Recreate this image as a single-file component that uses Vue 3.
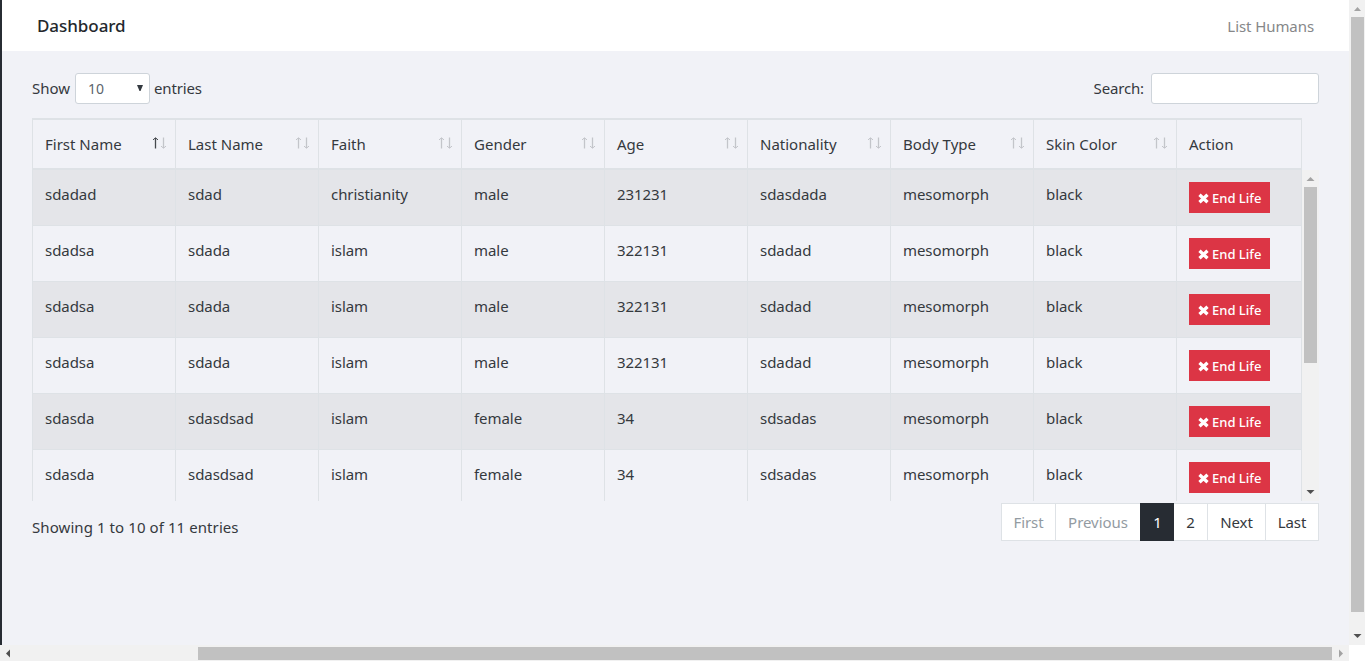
<script setup>
const columns = ['First Name', 'Last Name', 'Faith', 'Gender', 'Age', 'Nationality', 'Body Type', 'Skin Color', 'Action']
const islamMale = ['sdadsa', 'sdada', 'islam', 'male', '322131', 'sdadad', 'mesomorph', 'black']
const islamFemale = ['sdasda', 'sdasdsad', 'islam', 'female', '34', 'sdsadas', 'mesomorph', 'black']
const rows = [
  ['sdadad', 'sdad', 'christianity', 'male', '231231', 'sdasdada', 'mesomorph', 'black'],
  islamMale, islamMale, islamMale, islamFemale, islamFemale,
]
const pages = [
  { label: 'First', cls: 'first muted' },
  { label: 'Previous', cls: 'previous muted' },
  { label: '1', cls: 'num active' },
  { label: '2', cls: 'num' },
  { label: 'Next', cls: 'next' },
  { label: 'Last', cls: 'last' },
]
</script>

<template>
  <div class="window">
    <main class="page">
      <header class="topbar">
        <span class="brand">Dashboard</span>
        <a class="nav-link">List Humans</a>
      </header>
      <section class="content">
        <div class="controls">
          <label class="length"><span class="show">Show</span>
            <span class="select"><span>10</span>
              <svg width="6" height="7" viewBox="0 0 6 7"><path d="M0 0h6L3.5 6h-1z" fill="#343a40" /></svg>
            </span>
            <span class="entries">entries</span>
          </label>
          <label class="filter"><span class="search-label">Search:</span><input type="text" class="search" /></label>
        </div>

        <div class="grid-row head">
          <div v-for="(c, i) in columns" :key="c" class="cell th">
            <span>{{ c }}</span>
            <svg v-if="i < 8" class="sort" width="15" height="12" viewBox="0 0 15 12" fill="none">
              <g :stroke="i === 0 ? '#45494e' : '#c3c5ca'">
                <path d="M3.5 1v10.5" stroke-width="1.3" /><path d="M1 2.9 3.5.8 6 2.9" />
              </g>
              <g stroke="#c3c5ca">
                <path d="M11.5.5V11" stroke-width="1.3" /><path d="M9 9.1l2.5 2.1L14 9.1" />
              </g>
            </svg>
          </div>
        </div>
        <div class="scroll">
          <div class="body">
            <div v-for="(r, i) in rows" :key="i" class="grid-row row" :class="{ odd: i % 2 === 0 }">
              <div v-for="(v, j) in r" :key="j" class="cell td">{{ v }}</div>
              <div class="cell td action">
                <button class="end">
                  <svg width="11" height="11" viewBox="0 0 11 11"><path d="M1.5 1.7l8 7.6M9.5 1.7l-8 7.6" stroke="#fff" stroke-width="3.3" /></svg>
                  <span>End Life</span>
                </button>
              </div>
            </div>
          </div>
          <div class="bar inner">
            <svg width="16" height="17" viewBox="0 0 16 17"><path d="M4.5 11 8.5 7l4 4z" fill="#a3a3a3" /></svg>
            <i class="thumb"></i>
            <svg class="end-arrow" width="16" height="17" viewBox="0 0 16 17"><path d="M4.5 6h8l-4 4z" fill="#505050" /></svg>
          </div>
        </div>

        <div class="footer">
          <span class="info">Showing 1 to 10 of 11 entries</span>
          <nav class="pager">
            <a v-for="p in pages" :key="p.label" :class="p.cls"><span>{{ p.label }}</span></a>
          </nav>
        </div>
      </section>
    </main>
    <div class="bar outer">
      <svg width="16" height="17" viewBox="0 0 16 17"><path d="M5 11l3.5-4 3.5 4z" fill="#a3a3a3" /></svg>
      <i class="thumb"></i>
      <svg class="end-arrow" width="16" height="17" viewBox="0 0 16 17"><path d="M4.5 6h8l-4 4z" fill="#505050" /></svg>
    </div>
    <div class="hbar">
      <svg width="17" height="16" viewBox="0 0 17 16"><path d="M10 4.5v8l-4-4z" fill="#505050" /></svg>
      <i class="hthumb"></i>
      <svg width="17" height="16" viewBox="0 0 17 16"><path d="M7 4.5v8l4-4z" fill="#a3a3a3" /></svg>
    </div>
    <div class="corner"></div>
  </div>
</template>

<style>
html, body { margin: 0; overflow: hidden; }
</style>

<style scoped>
* { box-sizing: border-box; }
.window {
  display: grid;
  grid-template: 645px 16px / 1349px 16px;
  width: 1365px;
  height: 661px;
  background: #fff;
  font: 15px/24px "Noto Sans", "Open Sans", sans-serif;
  color: #35393e;
  white-space: nowrap;
}
.page { border-left: 2px solid #272c33; background: #f1f2f7; min-width: 0; }
.topbar {
  display: flex;
  justify-content: space-between;
  align-items: center;
  height: 51px;
  padding: 0 35px;
  background: #fff;
}
.brand { font: 500 17px/24px "Noto Sans", sans-serif; color: #24282d; letter-spacing: -0.06px; }
.nav-link { color: #868789; letter-spacing: -0.08px; }
.content { padding: 22px 30px 0; }
.controls { display: flex; justify-content: space-between; height: 45px; align-items: flex-start; }
.length, .filter { display: flex; align-items: center; }
.show, .entries, .search-label { margin-top: -2px; }
.entries, .search-label { letter-spacing: -0.15px; }
.show { width: 43px; }
.select {
  display: flex;
  justify-content: space-between;
  align-items: center;
  width: 75px;
  height: 31px;
  padding: 0 6px 0 12px;
  margin-right: 4px;
  border: 1px solid #ced4da;
  border-radius: 3px;
  background: #fff;
  color: #5c646c;
  font-size: 14px;
}
.select svg { margin-top: -1px; }
.search {
  width: 168px;
  height: 31px;
  margin: 0 0 0 7px;
  border: 1px solid #ced4da;
  border-radius: 3px;
  background: #fff;
}
.grid-row {
  display: grid;
  grid-template-columns: repeat(8, 143px) 126px;
  width: 1270px;
}
.cell { border-left: 1px solid #dee2e6; padding-left: 12px; }
.cell:last-child { border-right: 1px solid #dee2e6; }
.head { height: 52px; border-top: 2px solid #dee2e6; border-bottom: 2px solid #dee2e6; }
.th { display: flex; justify-content: space-between; padding-top: 12px; padding-right: 8px; }
.sort { margin-top: 5px; }
.scroll { display: flex; height: 331px; overflow: hidden; }
.row { height: 56px; border-bottom: 1px solid #dee2e6; }
.odd { background: #e4e5e9; }
.td { padding-top: 12px; letter-spacing: -0.06px; }
.end {
  display: flex;
  align-items: center;
  gap: 3px;
  width: 81px;
  height: 31px;
  padding: 1px 0 0 9px;
  border: 0;
  background: #dc3545;
  color: #fff;
  font: 500 13px/20px "Noto Sans", sans-serif;
}
.bar { display: flex; flex-direction: column; background: #f1f1f1; }
.inner { width: 17px; height: 331px; }
.thumb { display: block; width: 13px; margin-left: 2px; background: #c1c1c1; }
.inner .thumb { height: 176px; }
.outer .thumb { height: 595px; }
.end-arrow { margin-top: auto; }
.hbar { display: flex; background: #f1f1f1; }
.hthumb { width: 1134px; height: 13px; margin: 2px 0 0 181px; background: #c1c1c1; }
.corner { background: #fff; }
.footer { display: flex; justify-content: space-between; padding-top: 2px; }
.info { padding-top: 12px; letter-spacing: 0.08px; }
.pager { display: flex; height: 38px; border: 1px solid #dee2e6; background: #fff; }
.pager a { display: flex; align-items: center; justify-content: center; border-left: 1px solid #dee2e6; color: #35393e; letter-spacing: -0.05px; }
.pager a:first-child { border-left: 0; }
.first { width: 53px; }
.previous { width: 85px; }
.num { width: 33px; }
.next { width: 58px; }
.last { width: 53px; }
.pager .muted { color: #939ba2; }
.pager .active { width: 34px; margin: -1px 0; background: #272c33; border-color: #272c33; color: #fff; }
.pager .active + a { border-left: 0; }
</style>
